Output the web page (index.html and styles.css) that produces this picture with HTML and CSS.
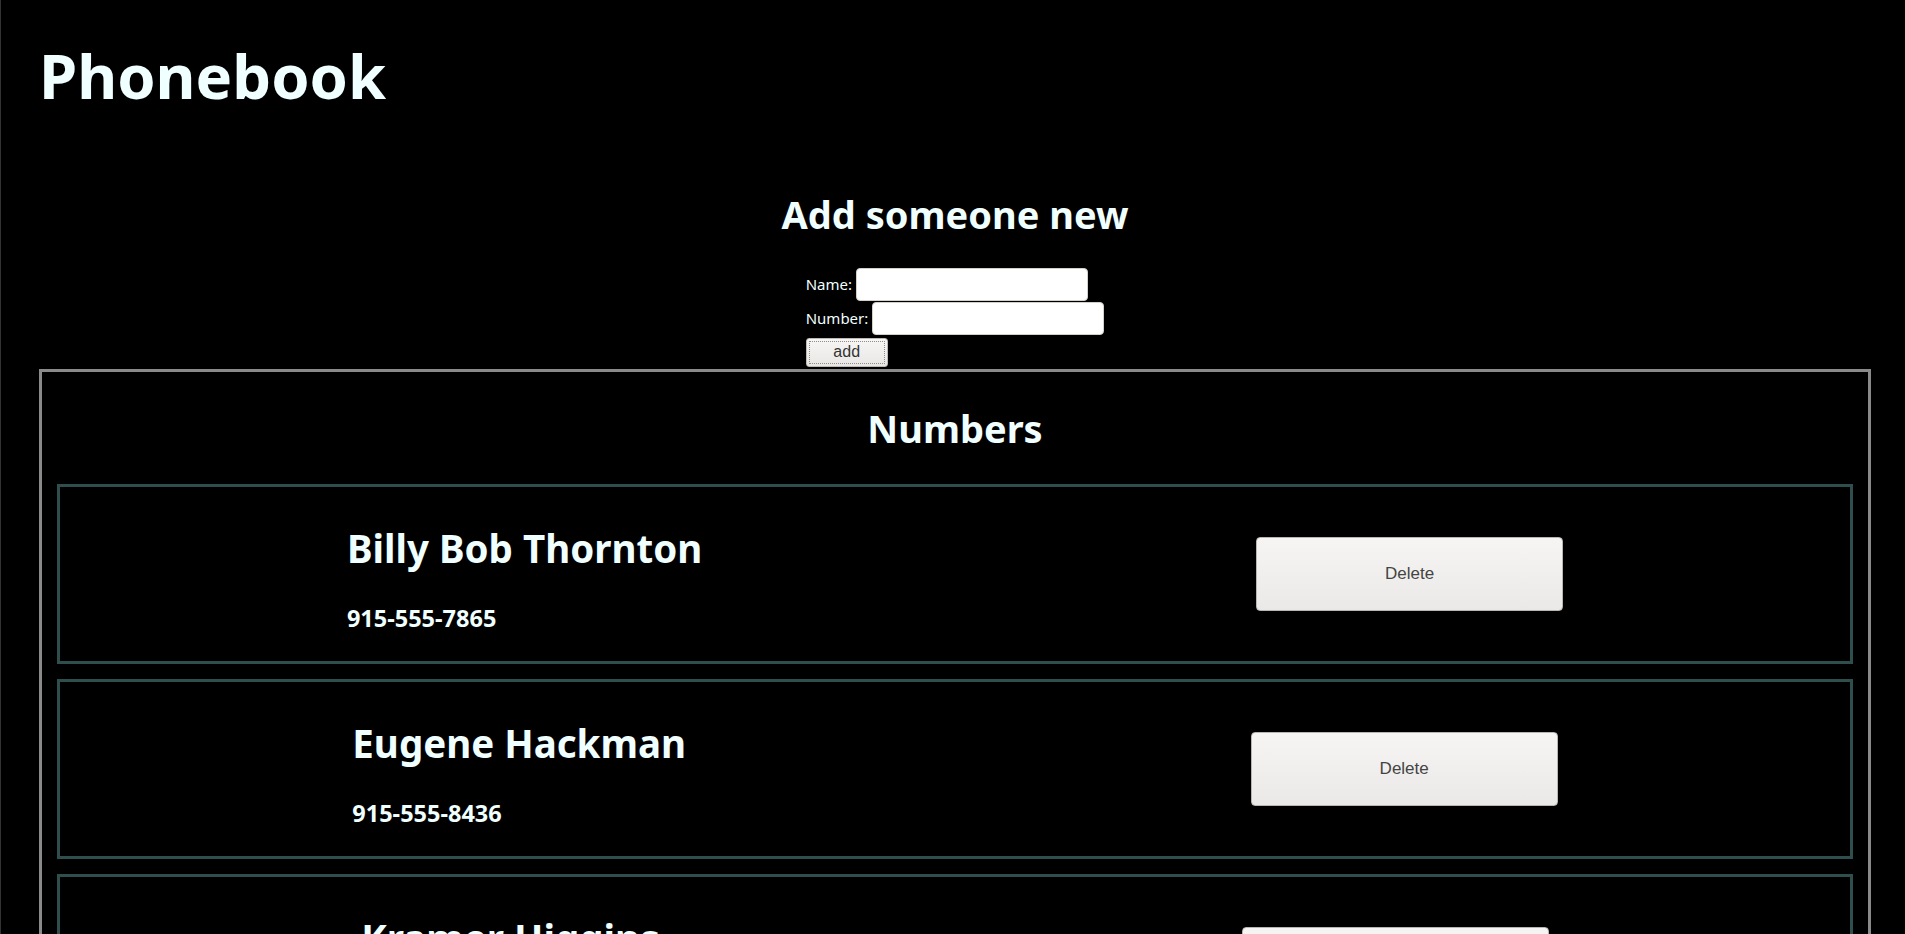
FILE: index.html
```html
<!DOCTYPE html>
<html lang="en">
<head>
<meta charset="utf-8">
<title>Phonebook</title>
<link rel="stylesheet" href="styles.css">
</head>
<body>
<div class="app">
  <h1 class="title">Phonebook</h1>
  <section class="add">
    <h2 class="heading">Add someone new</h2>
    <form class="form">
      <div class="row"><label class="label" for="name">Name:</label><input class="field" id="name" type="text"></div>
      <div class="row"><label class="label" for="number">Number:</label><input class="field" id="number" type="text"></div>
      <div class="row"><button class="add-btn" type="button">add</button></div>
    </form>
  </section>
  <section class="numbers">
    <h2 class="heading">Numbers</h2>
    <div class="card">
      <div class="info">
        <h2 class="name">Billy Bob Thornton</h2>
        <h3 class="phone">915-555-7865</h3>
      </div>
      <button class="del-btn" type="button">Delete</button>
    </div>
    <div class="card">
      <div class="info">
        <h2 class="name">Eugene Hackman</h2>
        <h3 class="phone">915-555-8436</h3>
      </div>
      <button class="del-btn" type="button">Delete</button>
    </div>
    <div class="card">
      <div class="info">
        <h2 class="name">Kramer Higgins</h2>
        <h3 class="phone">915-555-2391</h3>
      </div>
      <button class="del-btn" type="button">Delete</button>
    </div>
  </section>
</div>
</body>
</html>
```
FILE: styles.css
```css
html {
  background: #000;
  scrollbar-width: none;
}
html::-webkit-scrollbar { display: none; }

body {
  margin: 0;
  background: #000;
  color: #f0ffff;
  font-family: "Noto Sans", "DejaVu Sans", sans-serif;
  border-left: 1px solid #333;
}

.app {
  padding: 0 34px 0 38px;
}

.title {
  margin: 39px 0 44px 0;
  font-size: 61.5px;
  line-height: 73px;
  font-weight: 700;
}

.add {
  display: flex;
  flex-direction: column;
  align-items: center;
}

.heading {
  margin: 33px 0;
  font-size: 38px;
  line-height: 46px;
  font-weight: 700;
  text-align: center;
}

.add .heading {
  margin: 35px 0 30px;
}

.form {
  display: flex;
  flex-direction: column;
  align-items: flex-start;
}

.row {
  display: flex;
  align-items: center;
  gap: 4px;
  height: 34px;
}

.label {
  font-size: 15px;
}

.field {
  box-sizing: border-box;
  width: 232px;
  height: 33px;
  background: #fff;
  border: 1px solid #d3d0cc;
  border-radius: 4px;
  padding: 2px 6px;
}

.add-btn {
  box-sizing: border-box;
  width: 82px;
  height: 29px;
  font-family: "Liberation Sans", Arial, sans-serif;
  font-size: 16px;
  color: #333;
  background: linear-gradient(#f7f6f5, #e9e7e4);
  border: 1px solid #bdb9b4;
  border-radius: 3px;
  outline: 1px dotted #8f8c88;
  outline-offset: -4px;
  padding: 0;
}

.numbers {
  border: 3px solid #8a8a8a;
  padding: 0 15px;
}

.card {
  display: flex;
  justify-content: space-around;
  align-items: center;
  padding: 0 10px;
  border: 3px solid #2f4f4f;
  margin-bottom: 15px;
}

.info {
  padding: 38px 0 29px;
}

.name {
  margin: 0 0 33px;
  font-size: 38.5px;
  line-height: 46px;
  font-weight: 700;
}

.phone {
  margin: 0;
  font-size: 23.5px;
  line-height: 28px;
  font-weight: 700;
}

.del-btn {
  box-sizing: border-box;
  width: 307px;
  height: 74px;
  font-family: "Liberation Sans", Arial, sans-serif;
  font-size: 17px;
  color: #444;
  background: linear-gradient(#f6f5f4, #ebe9e7);
  border: 1px solid #b9b6b2;
  border-radius: 4px;
  padding: 0;
}
```
